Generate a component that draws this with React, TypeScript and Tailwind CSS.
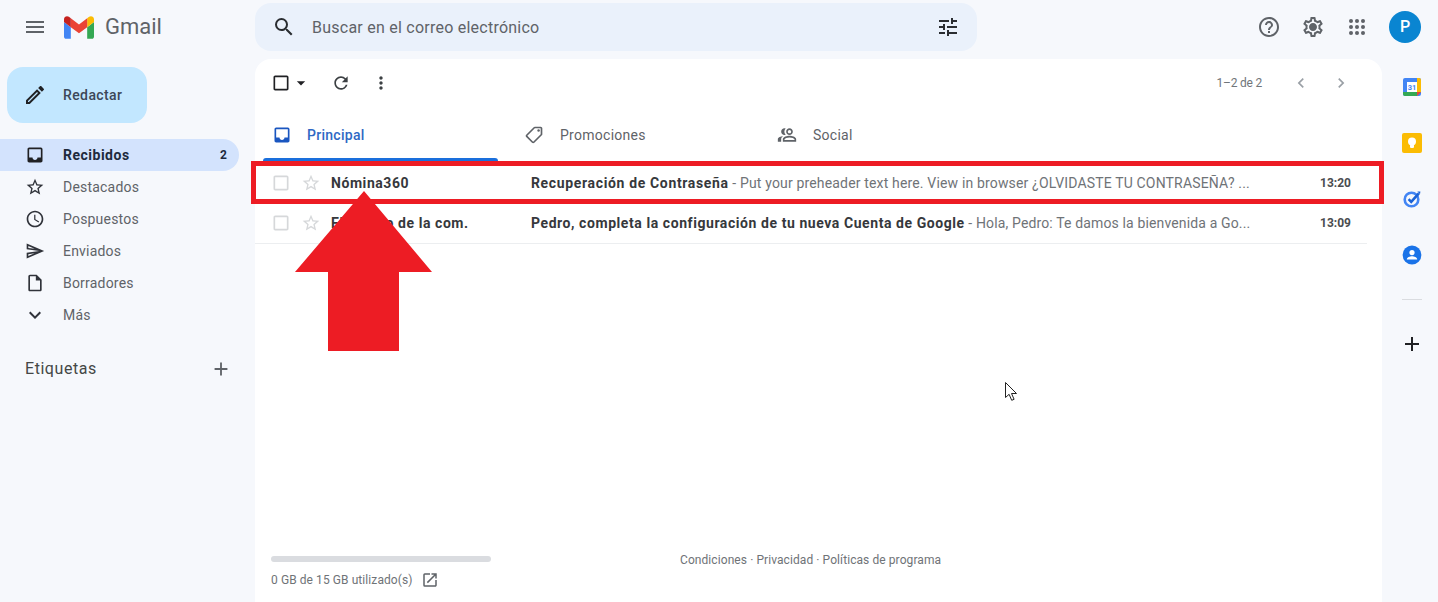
import {
  MdMenu, MdSearch, MdTune, MdHelpOutline, MdOutlineSettings, MdOutlineEdit, MdInbox, MdStarBorder,
  MdOutlineWatchLater, MdOutlineSend, MdOutlineInsertDriveFile, MdExpandMore, MdAdd,
  MdCheckBoxOutlineBlank, MdArrowDropDown, MdRefresh, MdMoreVert, MdChevronLeft, MdChevronRight,
  MdOutlineLocalOffer, MdOutlinePeopleAlt, MdOpenInNew,
} from "react-icons/md";

function GmailLogo() {
  return (
    <svg viewBox="52 42 88 66" className="w-[30px] h-[23px]">
      <path fill="#4285f4" d="M58 108h14V74L52 59v43c0 3.32 2.69 6 6 6" />
      <path fill="#34a853" d="M120 108h14c3.32 0 6-2.69 6-6V59l-20 15" />
      <path fill="#fbbc04" d="M120 48v26l20-15v-8c0-7.42-8.47-11.65-14.4-7.2" />
      <path fill="#ea4335" d="M72 74V48l24 18 24-18v26L96 92" />
      <path fill="#c5221f" d="M52 51v8l20 15V48l-5.6-4.2c-5.94-4.45-14.4-.22-14.4 7.2" />
    </svg>
  );
}

function AppsDots() {
  const dots = [4, 10, 16];
  return (
    <svg viewBox="0 0 20 20" className="w-[20px] h-[20px]" fill="#5f6368">
      {dots.map((y) => dots.map((x) => <circle key={`${x}-${y}`} cx={x} cy={y} r="2" />))}
    </svg>
  );
}

function GearIcon() {
  return (
    <span className="relative ml-[20px] w-[24px] h-[24px] block">
      <MdOutlineSettings className="w-[24px] h-[24px] text-[#5f6368]" />
      <span className="absolute left-[9px] top-[9px] w-[6px] h-[6px] rounded-full bg-[#5f6368]" />
    </span>
  );
}

function CalendarIcon() {
  return (
    <svg viewBox="0 0 20 20" className="w-[20px] h-[20px]">
      <rect x="1" y="1" width="18" height="18" rx="2" fill="#4285f4" />
      <path d="M15 1h2a2 2 0 0 1 2 2v12h-4z" fill="#fbbc04" />
      <path d="M1 15h14v4H3a2 2 0 0 1-2-2z" fill="#34a853" />
      <path d="M15 15h4l-4 4z" fill="#ea4335" />
      <rect x="5" y="5" width="10" height="10" fill="#fff" />
      <text x="10" y="12.8" textAnchor="middle" fontSize="7.5" fontWeight="700" fill="#4285f4" fontFamily="Roboto, sans-serif">31</text>
    </svg>
  );
}

function KeepIcon() {
  return (
    <svg viewBox="0 0 20 20" className="w-[20px] h-[20px]">
      <rect x="0" y="0" width="20" height="20" rx="2" fill="#fbbc04" />
      <circle cx="10" cy="8.6" r="4" fill="#fff" />
      <rect x="8" y="11.5" width="4" height="3.4" rx="0.8" fill="#fff" />
    </svg>
  );
}

function TasksIcon() {
  return (
    <svg viewBox="0 0 20 20" className="w-[20px] h-[20px]" fill="none">
      <circle cx="9.5" cy="10.5" r="6.8" stroke="#4285f4" strokeWidth="2.6" />
      <path d="M6.6 10.2l2.6 2.6 7.6-8.4" stroke="#1a62d6" strokeWidth="2.6" />
      <path d="M15.4 2.5l3 0-0.4 2.8z" fill="#1a62d6" />
    </svg>
  );
}

function ContactsIcon() {
  return (
    <svg viewBox="0 0 20 20" className="w-[20px] h-[20px]">
      <circle cx="10" cy="10" r="9.4" fill="#1a73e8" />
      <circle cx="10" cy="7.6" r="2.6" fill="#fff" />
      <path d="M4.8 14.4c0-2.2 3.2-3.2 5.2-3.2s5.2 1 5.2 3.2z" fill="#fff" />
    </svg>
  );
}

const navItems = [
  { label: "Destacados", Icon: MdStarBorder, cls: "w-[20px] h-[20px]", gap: "ml-[18px]" },
  { label: "Pospuestos", Icon: MdOutlineWatchLater, cls: "w-[20px] h-[20px]", gap: "ml-[18px]" },
  { label: "Enviados", Icon: MdOutlineSend, cls: "w-[20px] h-[20px]", gap: "ml-[18px]" },
  { label: "Borradores", Icon: MdOutlineInsertDriveFile, cls: "w-[20px] h-[20px]", gap: "ml-[18px]" },
  { label: "Más", Icon: MdExpandMore, cls: "w-[24px] h-[24px] -ml-[2px]", gap: "ml-[16px]" },
];

const rows = [
  {
    sender: "Nómina360",
    subject: "Recuperación de Contraseña",
    snippet: " - Put your preheader text here. View in browser ¿OLVIDASTE TU CONTRASEÑA? ...",
    time: "13:20",
    rowCls: "h-[40px]",
    subjectCls: "tracking-[0.65px]",
    snippetCls: "tracking-[0.16px]",
  },
  {
    sender: "El equipo de la com.",
    subject: "Pedro, completa la configuración de tu nueva Cuenta de Google",
    snippet: " - Hola, Pedro: Te damos la bienvenida a Go...",
    time: "13:09",
    rowCls: "h-[41px] border-b border-[#eceef0]",
    subjectCls: "tracking-[0.57px]",
    snippetCls: "tracking-[0.14px]",
  },
];

function Sidebar() {
  return (
    <aside className="w-[255px] shrink-0 flex flex-col">
      <button className="ml-[7px] mt-[8px] w-[140px] h-[56px] rounded-2xl bg-[#c2e7ff] flex items-center pl-[16px] gap-[16px] text-[14px] font-medium tracking-[0.4px] text-[#3c4758]">
        <MdOutlineEdit className="w-[24px] h-[24px] text-[#202124]" />
        Redactar
      </button>
      <div className="mt-[16px] w-[239px] h-[32px] rounded-r-full bg-[#d3e3fd] flex items-center pl-[25px] pr-[12px] text-[14px] font-bold text-[#202a3c]">
        <MdInbox className="w-[20px] h-[20px] text-[#202124]" />
        <span className="ml-[18px] flex-1 tracking-[0.5px]">Recibidos</span>
        <span className="text-[12px]">2</span>
      </div>
      {navItems.map(({ label, Icon, cls, gap }) => (
        <div key={label} className="h-[32px] flex items-center pl-[25px] text-[14px] tracking-[0.2px] text-[#5f6368]">
          <Icon className={`${cls} text-[#30333a]`} />
          <span className={gap}>{label}</span>
        </div>
      ))}
      <div className="mt-[22px] flex items-center justify-between pl-[25px] pr-[23px] h-[32px] text-[16px] tracking-[0.55px] text-[#444746]">
        <span>Etiquetas</span>
        <MdAdd className="w-[22px] h-[22px] text-[#5f6368]" />
      </div>
    </aside>
  );
}

function MailRow({ row }: { row: (typeof rows)[number] }) {
  return (
    <div className={`${row.rowCls} flex items-center pl-[16px] text-[14px]`}>
      <MdCheckBoxOutlineBlank className="w-[20px] h-[20px] text-[#d6d8da]" />
      <MdStarBorder className="ml-[10px] w-[20px] h-[20px] text-[#d6d8da]" />
      <span className="ml-[10px] w-[200px] shrink-0 font-bold tracking-[0.57px] text-[#36383c] truncate">{row.sender}</span>
      <span className={`w-[725px] truncate text-[#6f7377] ${row.snippetCls}`}>
        <span className={`font-bold text-[#36383c] ${row.subjectCls}`}>{row.subject}</span>
        {row.snippet}
      </span>
      <span className="ml-auto mr-[16px] text-[12px] font-bold text-[#4a4d50]">{row.time}</span>
    </div>
  );
}

function Main() {
  return (
    <main className="w-[1127px] shrink-0 bg-white rounded-t-2xl flex flex-col">
      <div className="h-[48px] flex items-center pl-[16px] pr-[31px] text-[#3c4043]">
        <MdCheckBoxOutlineBlank className="w-[20px] h-[20px] text-[#202124]" />
        <MdArrowDropDown className="w-[20px] h-[20px] text-[#202124]" />
        <MdRefresh className="ml-[20px] w-[20px] h-[20px] text-[#3c4043]" />
        <MdMoreVert className="ml-[20px] w-[20px] h-[20px] text-[#3c4043]" />
        <span className="ml-auto text-[12px] tracking-[-0.2px] text-[#70757a]">1–2 de 2</span>
        <MdChevronLeft className="ml-[29px] w-[20px] h-[20px] text-[#9aa0a6]" />
        <MdChevronRight className="ml-[20px] w-[20px] h-[20px] text-[#9aa0a6]" />
      </div>
      <div className="mt-[3px] h-[50px] flex pl-[8px] text-[14px] tracking-[0.27px] text-[#5f6368]">
        <div className="w-[235px] h-full relative flex items-center pl-[9px] font-medium text-[#2f68c4]">
          <MdInbox className="w-[20px] h-[20px] text-[#1a56c0]" />
          <span className="ml-[15px]">Principal</span>
          <span className="absolute left-0 right-0 bottom-[-1px] h-[3px] rounded-t bg-[#1a6fdc]" />
        </div>
        <div className="ml-[26px] w-[253px] flex items-center gap-[16px]">
          <MdOutlineLocalOffer className="w-[20px] h-[20px] -scale-x-100" />
          <span>Promociones</span>
        </div>
        <div className="flex items-center gap-[16px]">
          <MdOutlinePeopleAlt className="w-[20px] h-[20px] -scale-x-100" />
          <span>Social</span>
        </div>
      </div>
      <div className="mt-[3px] mr-[15px]">
        {rows.map((r) => (
          <MailRow key={r.time} row={r} />
        ))}
      </div>
      <footer className="mt-auto mb-[12px] pl-[16px] mr-[15px] flex text-[12px] tracking-[0.08px] text-[#6f7377]">
        <div className="w-[220px] shrink-0">
          <div className="h-[6px] rounded-full bg-[#dadce0]" />
          <div className="mt-[8px] flex items-center h-[20px] whitespace-nowrap">
            0 GB de 15 GB utilizado(s)
            <MdOpenInNew className="ml-[8px] w-[18px] h-[18px] text-[#5f6368] shrink-0" />
          </div>
        </div>
        <div className="ml-[189px] -mt-[5px] leading-[18px]">Condiciones · Privacidad · Políticas de programa</div>
      </footer>
    </main>
  );
}

function RightRail() {
  return (
    <div className="flex-1 flex flex-col items-center pt-[18px] gap-[36px] pl-[4px]">
      <CalendarIcon />
      <KeepIcon />
      <TasksIcon />
      <ContactsIcon />
      <div className="w-[20px] h-px bg-[#dadce0] -my-[2px]" />
      <MdAdd className="w-[24px] h-[24px] text-[#202124] -mt-[2px]" />
    </div>
  );
}

export default function App() {
  return (
    <div className="relative w-[1438px] h-[602px] overflow-hidden bg-[#f6f8fc] flex flex-col font-['Roboto',sans-serif]">
      <header className="h-[59px] shrink-0 flex items-center pb-[5px]">
        <div className="w-[255px] shrink-0 flex items-center pl-[23px]">
          <MdMenu className="w-[24px] h-[24px] text-[#5f6368]" />
          <span className="ml-[17px]"><GmailLogo /></span>
          <span className="ml-[11px] text-[22px] leading-none text-[#5f6368]">Gmail</span>
        </div>
        <div className="w-[722px] h-[48px] rounded-2xl bg-[#eaf1fb] flex items-center pl-[17px] pr-[17px]">
          <MdSearch className="w-[24px] h-[24px] text-[#2a2d31]" />
          <span className="ml-[16px] flex-1 pt-[1px] text-[16px] tracking-[0.24px] text-[#5f6368]">Buscar en el correo electrónico</span>
          <MdTune className="w-[24px] h-[24px] text-[#2a2d31]" />
        </div>
        <div className="flex-1 flex items-center justify-end pr-[17px]">
          <MdHelpOutline className="w-[24px] h-[24px] text-[#5f6368]" />
          <GearIcon />
          <span className="ml-[22px]"><AppsDots /></span>
          <span className="ml-[22px] w-[32px] h-[32px] rounded-full bg-[#0a85d1] text-white flex items-center justify-center text-[16px] font-medium">P</span>
        </div>
      </header>
      <div className="flex-1 min-h-0 flex">
        <Sidebar />
        <Main />
        <RightRail />
      </div>

      {/* Annotation overlays */}
      <div className="absolute left-[251px] top-[161px] w-[1133px] h-[43px] border-[5px] border-[#ed1c24]" />
      <svg className="absolute left-[290px] top-[186px] w-[150px] h-[170px]" viewBox="290 186 150 170">
        <polygon points="364,191 432,272 399,272 399,351 328,351 328,272 295,272" fill="#ed1c24" />
      </svg>
      <svg className="absolute left-[1004px] top-[381px] w-[16px] h-[22px]" viewBox="0 0 16 22">
        <path d="M1.5 1.5v15l3.6-3.2 2.6 6 2.4-1-2.6-5.8h5z" fill="#fff" stroke="#222" strokeWidth="1" />
      </svg>
    </div>
  );
}
